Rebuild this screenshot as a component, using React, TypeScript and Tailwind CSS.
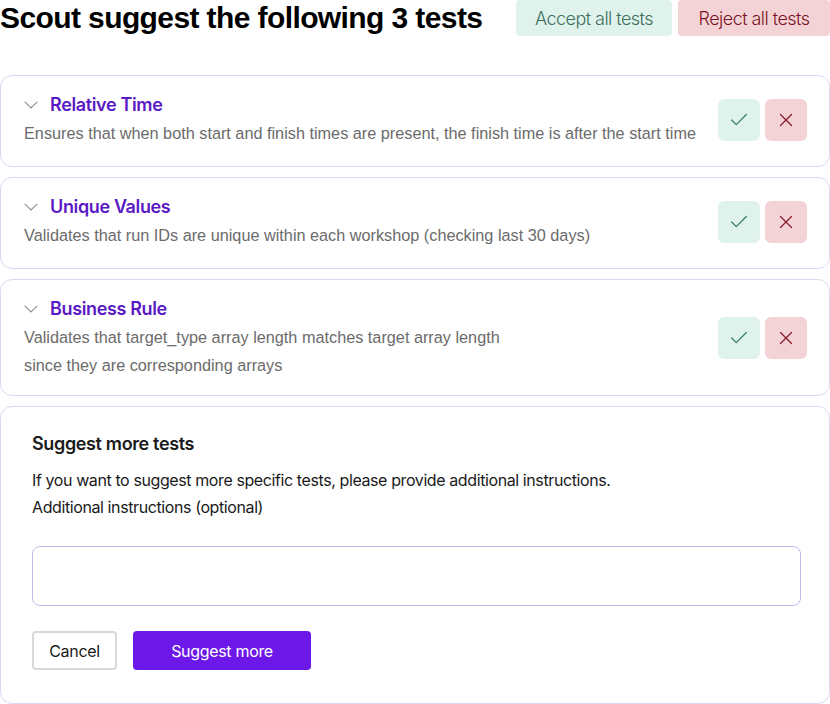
import React from 'react';
import { Check, X } from 'lucide-react';

interface SuggestedTest {
    title: string;
    description: React.ReactNode;
    multiline?: boolean;
}

const tests: SuggestedTest[] = [
    {
        title: 'Relative Time',
        description: 'Ensures that when both start and finish times are present, the finish time is after the start time',
    },
    {
        title: 'Unique Values',
        description: 'Validates that run IDs are unique within each workshop (checking last 30 days)',
    },
    {
        title: 'Business Rule',
        multiline: true,
        description: (
            <>
                Validates that target_type array length matches target array length
                <br />
                since they are corresponding arrays
            </>
        ),
    },
];

const Chevron = () => (
    <svg width="14" height="8" viewBox="0 0 14 8" fill="none" className="text-[#8a8a8a]">
        <path d="M1 1.2 L7 6.8 L13 1.2" stroke="currentColor" strokeWidth="1.1" strokeLinecap="round" strokeLinejoin="round" />
    </svg>
);

const TestCard = ({ test }: { test: SuggestedTest }) => (
    <div className={`flex items-center justify-between rounded-[12px] border border-[#dcd8ee] bg-white pl-[23px] pr-[22px] pt-[17px] ${test.multiline ? 'pb-[16px]' : 'pb-[19px]'}`}>
        <div>
            <div className="flex items-center gap-3 h-6">
                <Chevron />
                <h3 className="font-['Inter',sans-serif] text-[18px] font-semibold tracking-[-0.02em] text-[#5a19c4] leading-6">{test.title}</h3>
            </div>
            <p className="mt-[2px] font-['Liberation_Sans',Arial,sans-serif] text-[16.25px] leading-7 text-[#6b6b6b]">{test.description}</p>
        </div>
        <div className="flex gap-[5px] shrink-0">
            <button className="h-[42px] w-[42px] rounded-md bg-[#dff3ec] flex items-center justify-center text-[#2f7d5b]">
                <Check className="h-[22px] w-[22px]" strokeWidth={1.3} />
            </button>
            <button className="h-[42px] w-[42px] rounded-md bg-[#f4d3d6] flex items-center justify-center text-[#8b1a2b]">
                <X className="h-[22px] w-[22px]" strokeWidth={1.3} />
            </button>
        </div>
    </div>
);

export default function App() {
    return (
        <div className="w-[830px] bg-white font-['Inter',sans-serif]">
            <div className="flex items-center justify-between h-9">
                <h1 className="font-['Liberation_Sans',Arial,sans-serif] text-[30px] font-bold tracking-[-0.02em] text-black leading-9">Scout suggest the following 3 tests</h1>
                <div className="flex gap-[6px]">
                    <button className="h-9 w-[156px] rounded-[4px] bg-[#dff3ec] text-[18px] font-light tracking-[-0.03em] text-[#3e6e5c]">Accept all tests</button>
                    <button className="h-9 w-[152px] rounded-[4px] bg-[#f4d3d6] text-[18px] font-light tracking-[-0.03em] text-[#7a1425]">Reject all tests</button>
                </div>
            </div>

            <div className="mt-[39px] flex flex-col gap-[10px]">
                {tests.map(t => <TestCard key={t.title} test={t} />)}

                <div className="rounded-[12px] border border-[#dcd8ee] bg-white pl-[31px] pr-[28px] pt-7 pb-[33px]">
                    <h2 className="text-[18px] font-semibold tracking-[-0.02em] text-[#1a1a1a] leading-[18px]">Suggest more tests</h2>
                    <p className="mt-[14px] text-[16px] tracking-[-0.025em] text-[#1a1a1a] leading-[27px]">
                        If you want to suggest more specific tests, please provide additional instructions.
                        <br />
                        Additional instructions (optional)
                    </p>
                    <textarea className="mt-[25px] block h-[60px] w-full resize-none rounded-lg border border-[#c7b8ea] outline-none" />
                    <div className="mt-[25px] flex gap-4">
                        <button className="h-[39px] w-[85px] rounded-[4px] border-2 border-[#d6d9d9] bg-white text-[16px] tracking-[-0.02em] text-[#1a1a1a]">Cancel</button>
                        <button className="h-[39px] w-[178px] rounded-[4px] bg-[#6b18e8] text-[16px] tracking-[-0.02em] text-white">Suggest more</button>
                    </div>
                </div>
            </div>
        </div>
    );
}
